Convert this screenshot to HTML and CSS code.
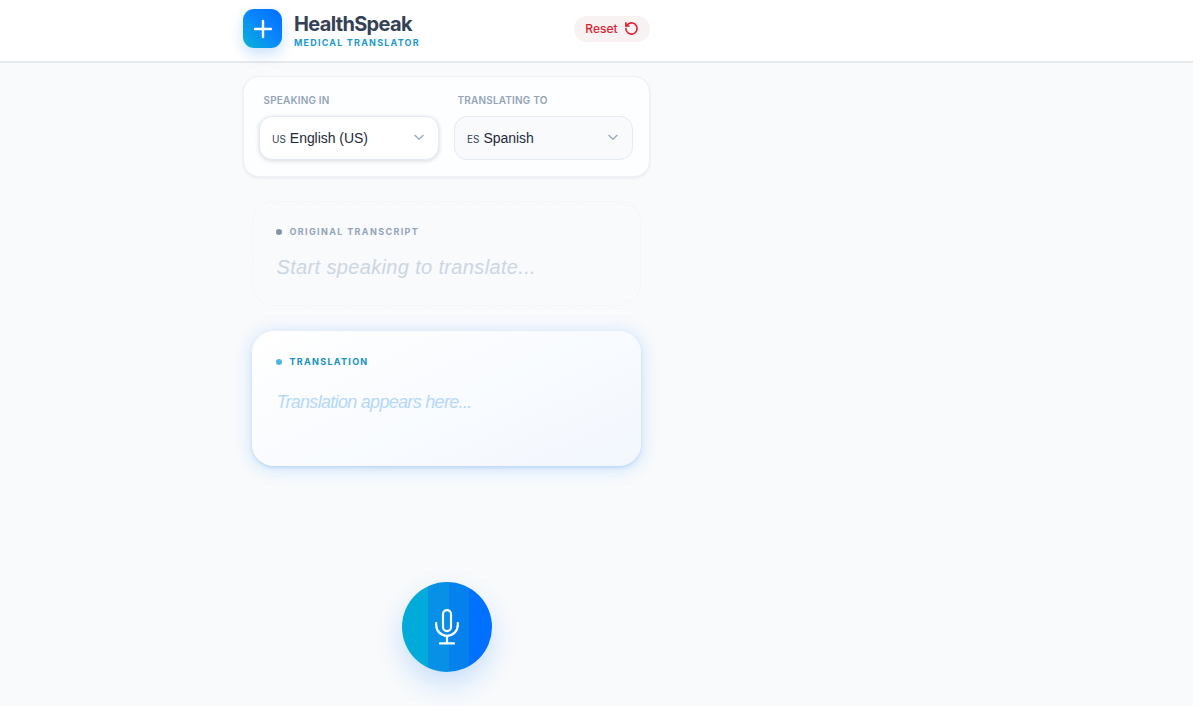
FILE: index.html
```html
<!DOCTYPE html>
<html lang="en">
<head>
<meta charset="utf-8">
<title>HealthSpeak</title>
<link rel="stylesheet" href="styles.css">
</head>
<body>
<div class="frame">
  <header class="topbar">
    <div class="column topbar-inner">
      <div class="brand">
        <div class="logo">
          <svg width="22" height="22" viewBox="0 0 22 22" fill="none" stroke="#fff" stroke-width="2.4" stroke-linecap="round"><path d="M11 3v16M3 11h16"/></svg>
        </div>
        <div class="brand-text">
          <div class="brand-name">HealthSpeak</div>
          <div class="brand-sub">MEDICAL TRANSLATOR</div>
        </div>
      </div>
      <button class="reset">Reset
        <svg width="15" height="15" viewBox="0 0 24 24" fill="none" stroke="currentColor" stroke-width="2.5" stroke-linecap="round" stroke-linejoin="round"><path d="M3 12a9 9 0 1 0 3-6.7L3 8"/><path d="M3 3v5h5"/></svg>
      </button>
    </div>
  </header>
  <main class="column content">
    <section class="lang-card">
      <div class="lang-col">
        <div class="lang-label">SPEAKING IN</div>
        <div class="select select-active"><span class="code">US</span><span class="lang-name">English (US)</span>
          <svg class="chev" width="14" height="14" viewBox="0 0 24 24" fill="none" stroke="#94a3b8" stroke-width="2" stroke-linecap="round" stroke-linejoin="round"><path d="M5 9l7 7 7-7"/></svg>
        </div>
      </div>
      <div class="lang-col">
        <div class="lang-label">TRANSLATING TO</div>
        <div class="select"><span class="code">ES</span><span class="lang-name">Spanish</span>
          <svg class="chev" width="14" height="14" viewBox="0 0 24 24" fill="none" stroke="#94a3b8" stroke-width="2" stroke-linecap="round" stroke-linejoin="round"><path d="M5 9l7 7 7-7"/></svg>
        </div>
      </div>
    </section>
    <section class="panel panel-original">
      <div class="panel-label label-original"><span class="dot dot-original"></span>ORIGINAL TRANSCRIPT</div>
      <p class="placeholder placeholder-original">Start speaking to translate...</p>
    </section>
    <section class="panel panel-translation">
      <div class="panel-label label-translation"><span class="dot dot-translation"></span>TRANSLATION</div>
      <p class="placeholder placeholder-translation">Translation appears here...</p>
    </section>
    <div class="mic-wrap">
      <button class="mic" aria-label="Start listening">
        <svg width="24" height="36" viewBox="0 0 24 36" fill="none" stroke="#fff" stroke-width="2.2" stroke-linecap="round" stroke-linejoin="round"><rect x="8" y="1.1" width="8" height="21" rx="4"/><path d="M1.2 14v2a10.8 10.8 0 0 0 21.6 0v-2"/><path d="M12 27v7"/><path d="M5 34.4h14"/></svg>
      </button>
    </div>
  </main>
</div>
</body>
</html>
```
FILE: styles.css
```css
* { box-sizing: border-box; }
html, body { margin: 0; padding: 0; background: #fff; }
body { font-family: "Inter", "Liberation Sans", sans-serif; color: #1e293b; overflow: hidden; }
.frame { width: 1193px; height: 706px; background: #f8fafc; overflow: hidden; }
.column { width: 407px; margin-left: 243px; }
.topbar { height: 63px; background: #fff; border-bottom: 2px solid #e6e9ee; }
.topbar-inner { height: 61px; display: flex; align-items: flex-start; justify-content: space-between; padding-top: 9px; }
.brand { display: flex; align-items: flex-start; gap: 12px; }
.logo { width: 39px; height: 39px; border-radius: 11px; background: linear-gradient(45deg, #06b6d4 0%, #0a84ff 55%, #0070ff 100%); box-shadow: 0 6px 14px rgba(14, 120, 240, .22); display: flex; align-items: center; justify-content: center; }
.brand-text { padding-top: 4px; }
.brand-name { font-size: 20px; font-weight: 700; letter-spacing: -.67px; line-height: 22px; color: #334155; }
.brand-sub { font-size: 9px; font-weight: 700; letter-spacing: 1.2px; line-height: 12px; margin-top: 2px; color: #1a9ad0; }
.reset { margin: 7px 0 0; width: 76px; height: 26px; border: 0; border-radius: 13px; background: #f8f2f3; color: #e11d2e; font: 500 12px "Inter", sans-serif; display: flex; align-items: center; justify-content: center; gap: 6px; padding: 0 0 2px; }
.content { display: flex; flex-direction: column; }
.lang-card { margin-top: 13px; height: 101px; border-radius: 16px; background: #fdfeff; border: 1px solid #eef1f5; box-shadow: 0 1px 3px rgba(15, 23, 42, .08); display: flex; gap: 15px; padding: 0 15px; }
.lang-col { width: 180px; }
.lang-col:last-child { width: 179px; }
.lang-label { font-size: 10px; font-weight: 600; letter-spacing: .18px; line-height: 12px; color: #94a3b8; margin: 17px 0 10px 4.5px; }
.lang-col:last-child .lang-label { margin-left: 3.5px; }
.select { height: 44px; border-radius: 13px; border: 1px solid #e4ebf3; background: #f8fafc; display: flex; align-items: center; padding: 0 12px; position: relative; }
.select-active { background: #fff; box-shadow: 0 1px 4px rgba(15, 23, 42, .16); }
.code { font-size: 10px; color: #334155; margin-right: 4px; padding-top: 2px; }
.lang-name { font-family: "Liberation Sans", sans-serif; font-size: 14px; letter-spacing: -.05px; color: #1e293b; }
.chev { position: absolute; right: 12px; top: 13px; }
.panel { margin-left: 9px; width: 389px; border-radius: 22px; }
.panel-original { margin-top: 24px; height: 105px; border: 1px dashed #f0f3f7; padding: 23px 22.5px 0; }
.panel-translation { margin-top: 25px; height: 135px; background: linear-gradient(155deg, #ffffff 0%, #f2f7fe 100%); box-shadow: 0 2px 3px rgba(90, 165, 250, .25), 0 2px 14px 4px rgba(59, 150, 246, .16); padding: 24px 23.5px 0; }
.panel-label { display: flex; align-items: center; font-size: 9px; font-weight: 700; letter-spacing: 1.36px; line-height: 14px; }
.label-original { color: #94a3b8; }
.label-translation { color: #1590c0; letter-spacing: 1.3px; }
.dot { width: 6px; height: 6px; border-radius: 50%; margin-right: 8px; }
.dot-original { background: #8492a6; }
.dot-translation { background: #4fb4e6; }
.placeholder { margin: 0; font-style: italic; font-family: "Liberation Sans", sans-serif; }
.placeholder-original { font-size: 20px; line-height: 26px; margin: 15px 0 0 1px; letter-spacing: .35px; color: #ccd6e3; }
.placeholder-translation { font-size: 18px; line-height: 24px; margin: 21px 0 0 1px; letter-spacing: -.7px; color: #b5d8f9; }
.mic-wrap { margin-top: 116px; display: flex; justify-content: center; margin-left: 1px; }
.mic { width: 90px; height: 90px; border: 0; padding: 0; border-radius: 50%; background: linear-gradient(90deg, #00abdc 0 29%, #0790e5 29% 52%, #0581ee 52% 75%, #0070ff 75%); box-shadow: 0 12px 26px rgba(30, 130, 245, .22); display: flex; align-items: center; justify-content: center; }
```
